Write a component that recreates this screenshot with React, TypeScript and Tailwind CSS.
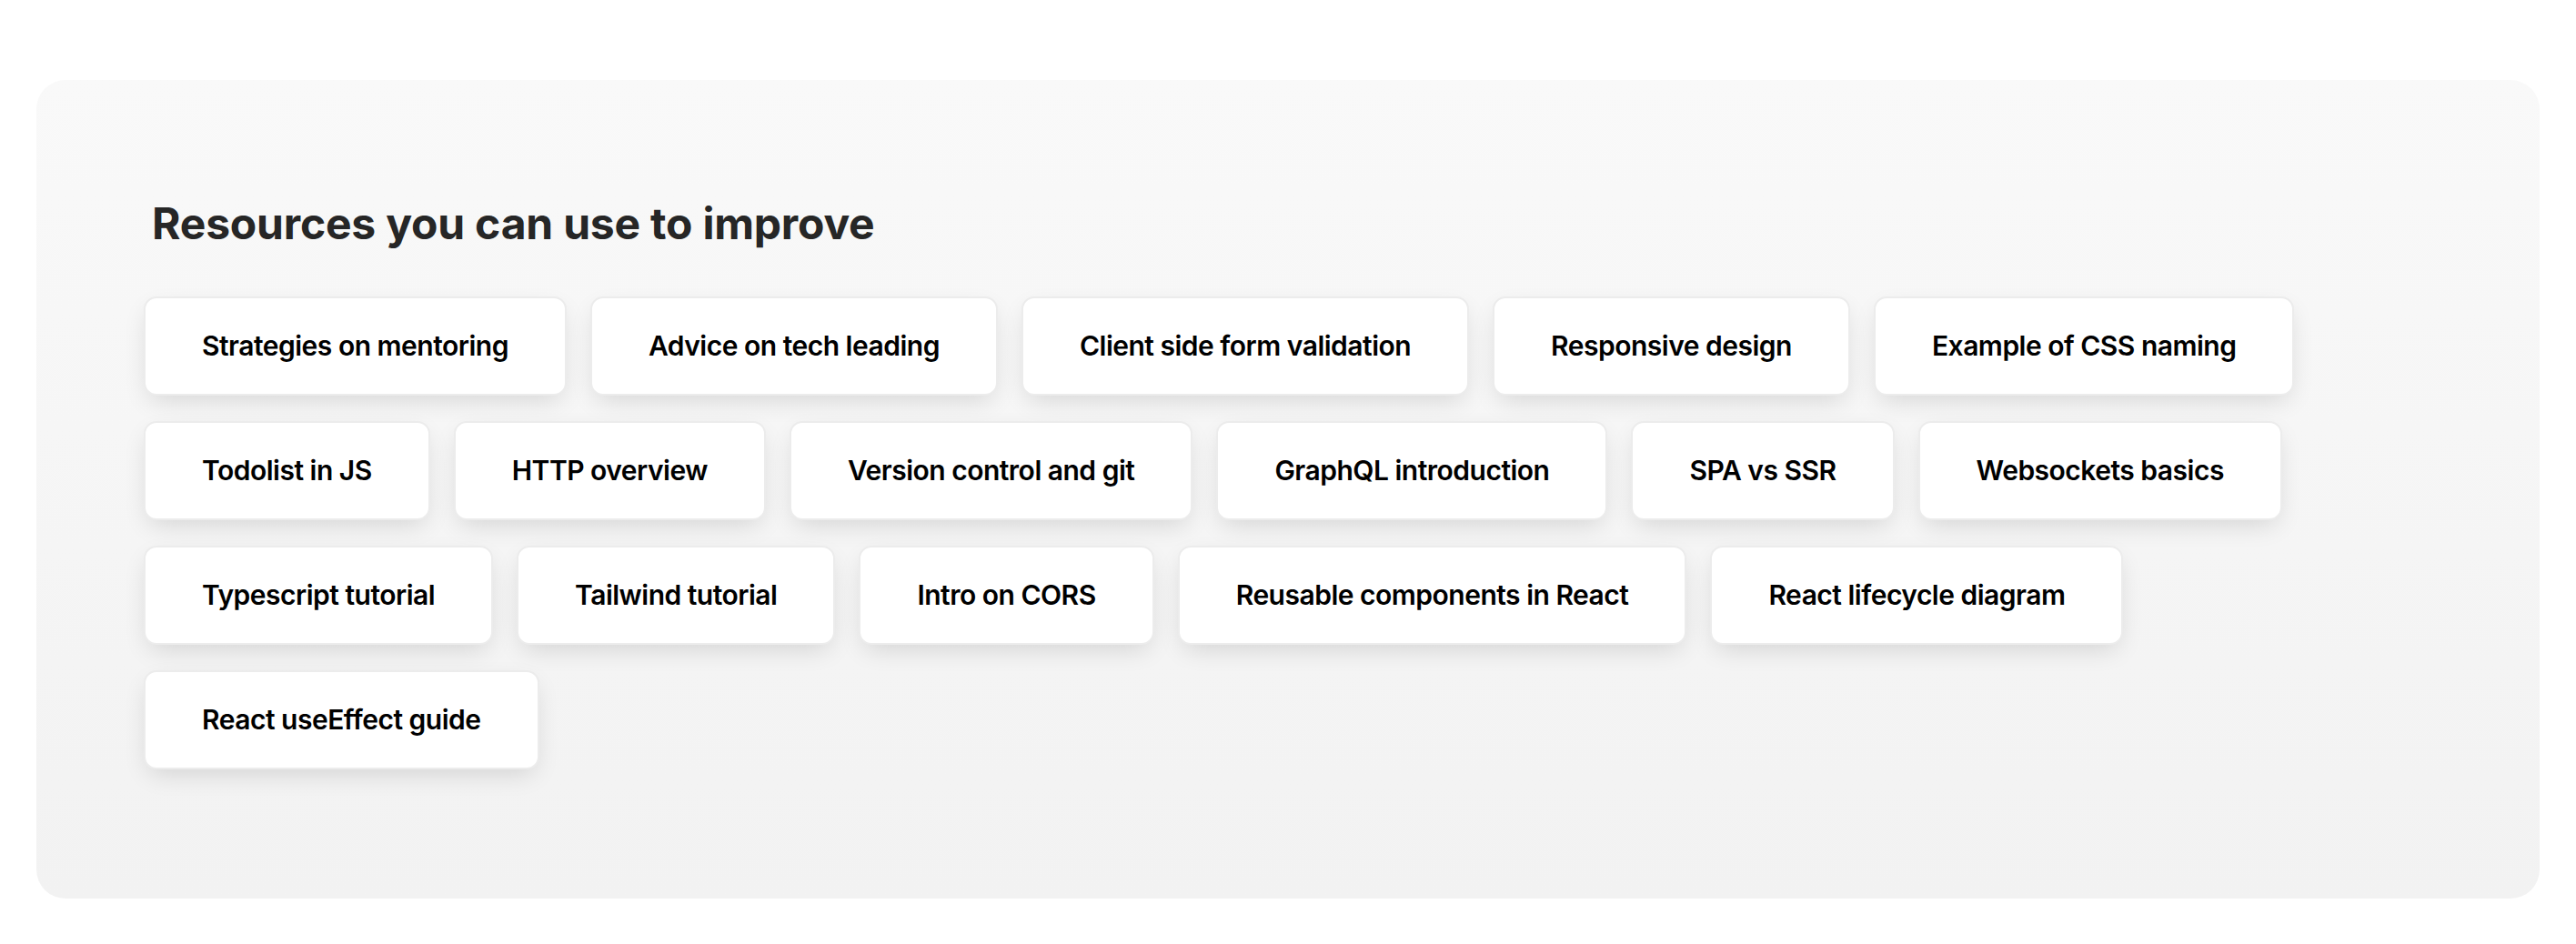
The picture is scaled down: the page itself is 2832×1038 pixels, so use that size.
import React from 'react'

const resources = [
  'Strategies on mentoring',
  'Advice on tech leading',
  'Client side form validation',
  'Responsive design',
  'Example of CSS naming',
  'Todolist in JS',
  'HTTP overview',
  'Version control and git',
  'GraphQL introduction',
  'SPA vs SSR',
  'Websockets basics',
  'Typescript tutorial',
  'Tailwind tutorial',
  'Intro on CORS',
  'Reusable components in React',
  'React lifecycle diagram',
  'React useEffect guide',
]

function ResourceCard({ label }: { label: string }) {
  return (
    <a
      href="#"
      className="block rounded-[14px] border-2 border-[#ececec] bg-white px-[62px] py-[30px] text-[30px] leading-[45px] font-semibold tracking-[-0.5px] text-black shadow-[0_10px_28px_-6px_rgba(0,0,0,0.14)]"
    >
      {label}
    </a>
  )
}

export default function App() {
  return (
    <div className="min-h-screen bg-white px-[40px] pt-[88px] pb-[51px] font-['Inter','Noto_Sans',sans-serif]">
      <section className="rounded-[32px] bg-linear-to-b from-[#f9f9f9] to-[#f2f2f2] px-[118px] pt-[126px] pb-[142px]">
        <h2 className="mb-[48px] pl-[9px] text-[48px] leading-[64px] font-bold tracking-[-0.2px] text-[#262626]">
          Resources you can use to improve
        </h2>
        <div className="flex flex-wrap gap-x-[26px] gap-y-[28px]">
          {resources.map((r) => (
            <ResourceCard key={r} label={r} />
          ))}
        </div>
      </section>
    </div>
  )
}
